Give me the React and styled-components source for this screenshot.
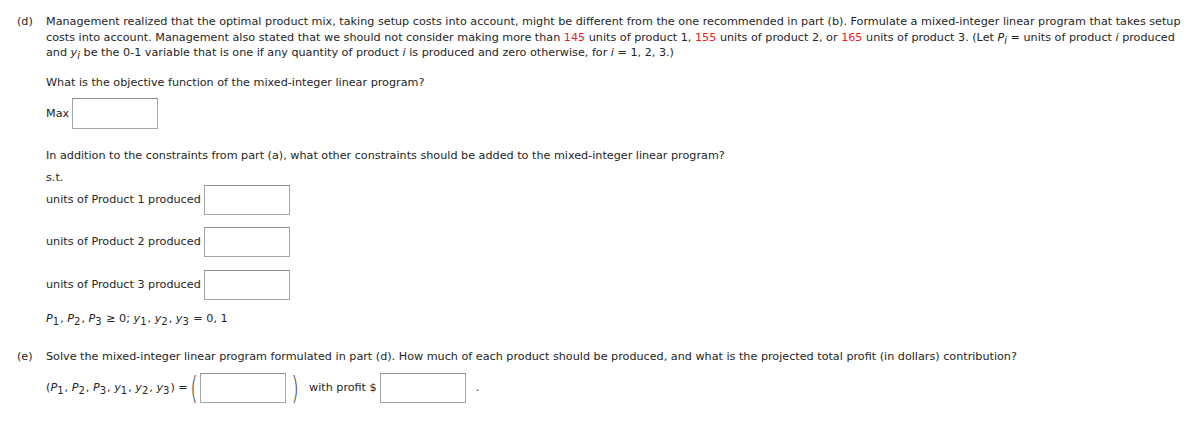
import React from "react";
import styled, { createGlobalStyle } from "styled-components";

const Global = createGlobalStyle`
    body {
        margin: 0;
        background: #fff;
    }
`;

const Page = styled.div`
    padding: 14px 0 0 17px;
    font-family: "DejaVu Sans", Verdana, sans-serif;
    font-size: 11.2px;
    line-height: 15.5px;
    color: #252525;
`;

const Part = styled.div`
    display: flex;
    margin-top: ${(p) => p.$top || 0}px;
`;

const Label = styled.div`
    width: 29px;
    flex: none;
`;

const Body = styled.div`
    flex: 1;
    padding-right: 16px;
    display: flex;
    flex-direction: column;
    align-items: flex-start;
`;

const Para = styled.div`
    margin-top: ${(p) => p.$top || 0}px;
`;

const Red = styled.span`
    color: #ee1c25;
`;

const Row = styled.div`
    display: flex;
    align-items: center;
    margin-top: ${(p) => p.$top || 0}px;
`;

const Text = styled.span`
    white-space: nowrap;
`;

const Box = styled.input`
    box-sizing: border-box;
    width: 86px;
    height: ${(p) => p.$h || 30}px;
    margin-left: ${(p) => p.$left ?? 3}px;
    border: 1px solid #a5a5a5;
    border-top-color: #8d8d8d;
    background: #fff;
    padding: 0;
`;

const V = styled.i`
    font-style: italic;
`;

const Sub = styled.sub`
    font-size: 10px;
    vertical-align: -3px;
    line-height: 0;
    margin-right: ${(p) => (p.$it ? 0 : 1)}px;
    font-style: ${(p) => (p.$it ? "italic" : "normal")};
`;

const Paren = styled.span`
    display: inline-block;
    font-weight: 200;
    font-size: 26px;
    line-height: 30px;
    color: #3a3a3a;
    transform: scale(0.75, 1.25);
    margin: 0 ${(p) => p.$r ?? p.$m ?? 0}px 0 ${(p) => p.$m || 0}px;
`;

const Dot = styled.span`
    margin-left: 10px;
`;

function Vars({ ys = true }) {
    return (
        <>
            <V>P</V><Sub>1</Sub>, <V>P</V><Sub>2</Sub>, <V>P</V><Sub>3</Sub>
            {ys && (
                <>
                    , <V>y</V><Sub>1</Sub>, <V>y</V><Sub>2</Sub>, <V>y</V><Sub>3</Sub>
                </>
            )}
        </>
    );
}

export default function App() {
    return (
        <Page>
            <Global />
            <Part>
                <Label>(d)</Label>
                <Body>
                    <Para>
                        Management realized that the optimal product mix, taking setup costs into account, might be
                        different from the one recommended in part (b). Formulate a mixed-integer linear program that
                        takes setup costs into account. Management also stated that we should not consider making more
                        than <Red>145</Red> units of product 1, <Red>155</Red> units of product 2, or <Red>165</Red> units
                        of product 3. (Let <V>P</V><Sub $it>i</Sub> = units of product <V>i</V> produced and <V>y</V>
                        <Sub $it>i</Sub> be the 0-1 variable that is one if any quantity of product <V>i</V> is produced
                        and zero otherwise, for <V>i</V> = 1, 2, 3.)
                    </Para>
                    <Para $top={14}>What is the objective function of the mixed-integer linear program?</Para>
                    <Row $top={8}>
                        <Text>Max</Text>
                        <Box $h={31} />
                    </Row>
                    <Para $top={19}>
                        In addition to the constraints from part (a), what other constraints should be added to the
                        mixed-integer linear program?
                    </Para>
                    <Para $top={6}>s.t.</Para>
                    <Row>
                        <Text>units of Product 1 produced</Text>
                        <Box />
                    </Row>
                    <Row $top={12}>
                        <Text>units of Product 2 produced</Text>
                        <Box />
                    </Row>
                    <Row $top={13}>
                        <Text>units of Product 3 produced</Text>
                        <Box />
                    </Row>
                    <Para $top={11}>
                        <Vars ys={false} /> ≥ 0; <V>y</V><Sub>1</Sub>, <V>y</V><Sub>2</Sub>, <V>y</V><Sub>3</Sub> = 0, 1
                    </Para>
                </Body>
            </Part>
            <Part $top={22}>
                <Label>(e)</Label>
                <Body>
                    <Para>
                        Solve the mixed-integer linear program formulated in part (d). How much of each product should be
                        produced, and what is the projected total profit (in dollars) contribution?
                    </Para>
                    <Row $top={9}>
                        <Text>
                            (<Vars />) =
                        </Text>
                        <Paren $m={1}>(</Paren>
                        <Box $left={0} />
                        <Paren $m={4} $r={9}>)</Paren>
                        <Text>with profit $</Text>
                        <Box />
                        <Dot>.</Dot>
                    </Row>
                </Body>
            </Part>
        </Page>
    );
}
